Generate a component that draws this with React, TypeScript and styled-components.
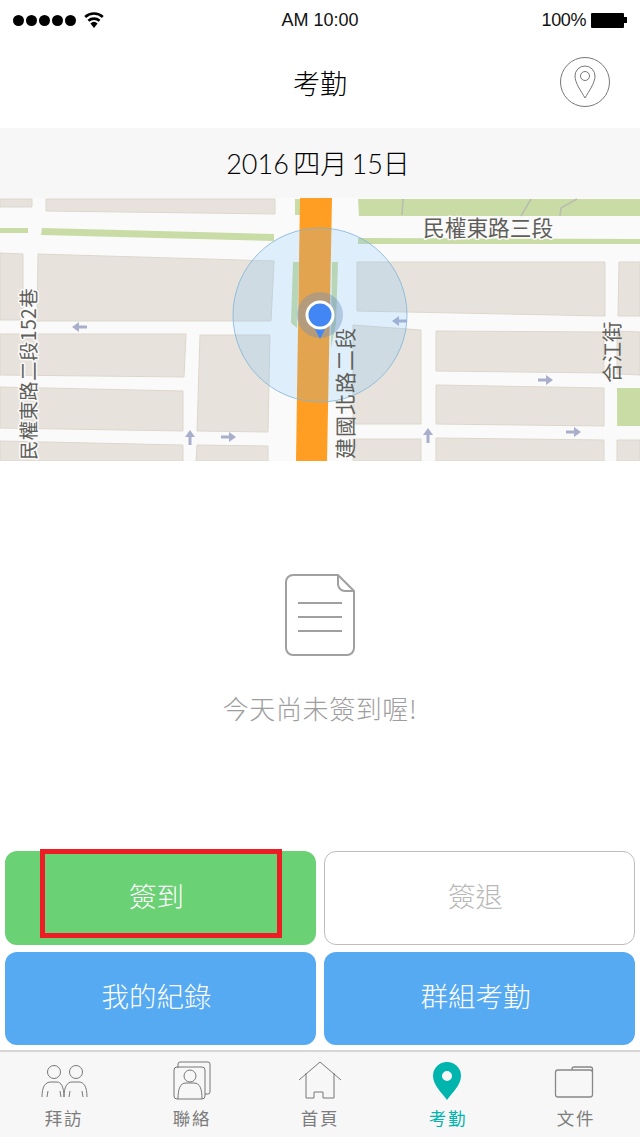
import * as React from "react";
import styled, { createGlobalStyle } from "styled-components";

const CJK = `"Noto Sans CJK TC", "Noto Sans CJK SC", sans-serif`;

const GlobalStyle = createGlobalStyle`
  html, body {
    margin: 0;
    padding: 0;
    background: #fff;
  }
  body {
    font-family: "Liberation Sans", ${CJK};
  }
`;

const Page = styled.div`
  width: 640px;
  height: 1137px;
  display: flex;
  flex-direction: column;
  overflow: hidden;
  background: #fff;
`;

const StatusBar = styled.div`
  height: 40px;
  padding: 0 13px 0 13px;
  display: grid;
  grid-template-columns: 1fr auto 1fr;
  align-items: center;
  color: #111;
  font-size: 18px;
  box-sizing: border-box;
`;

const Signal = styled.div`
  display: flex;
  align-items: center;
  gap: 2px;
`;

const Dot = styled.span`
  width: 11px;
  height: 11px;
  border-radius: 50%;
  background: #000;
`;

const Wifi = styled.svg`
  width: 22px;
  height: 16px;
  margin-left: 5px;
`;

const Clock = styled.span`
  font-family: "Liberation Sans", sans-serif;
`;

const Battery = styled.div`
  display: flex;
  align-items: center;
  justify-content: flex-end;
  gap: 5px;
  letter-spacing: -0.4px;
`;

const BatteryBody = styled.span`
  width: 33px;
  height: 15px;
  background: #000;
  border-radius: 1px;
  position: relative;
  margin-right: 3px;
  &::after {
    content: "";
    position: absolute;
    right: -3px;
    top: 4px;
    width: 3px;
    height: 6px;
    background: #000;
  }
`;

const Header = styled.header`
  height: 88px;
  display: flex;
  align-items: center;
  justify-content: center;
  position: relative;
  padding-bottom: 4px;
  box-sizing: border-box;
`;

const Title = styled.h1`
  margin: 0;
  font-family: ${CJK};
  font-weight: 300;
  font-size: 27px;
  color: #000;
`;

const LocateButton = styled.button`
  position: absolute;
  right: 30px;
  top: 17px;
  width: 50px;
  height: 50px;
  padding: 0;
  border: 1px solid #777;
  border-radius: 50%;
  background: transparent;
  display: flex;
  align-items: center;
  justify-content: center;
`;

const DateBar = styled.div`
  height: 70px;
  background: #f7f7f7;
  display: flex;
  align-items: center;
  justify-content: center;
  font-family: "Lato", ${CJK};
  font-size: 27px;
  font-weight: 300;
  color: #000;
  word-spacing: -3px;
  padding: 0 4px 2px 0;
  box-sizing: border-box;
`;

const MapFrame = styled.svg`
  display: block;
  width: 640px;
  height: 263px;
  flex: none;
`;

const Empty = styled.section`
  flex: 1;
  display: flex;
  flex-direction: column;
  align-items: center;
  padding-top: 113px;
  box-sizing: border-box;
`;

const EmptyText = styled.p`
  margin: 32px 0 0;
  font-family: ${CJK};
  font-weight: 300;
  font-size: 26px;
  line-height: 40px;
  letter-spacing: 0.6px;
  color: #9e9e9e;
`;

const Actions = styled.div`
  display: grid;
  grid-template-columns: 311px 311px;
  grid-template-rows: 94px 93px;
  column-gap: 8px;
  row-gap: 7px;
  padding: 0 5px;
  margin-bottom: 5px;
`;

const Action = styled.div<{ $tone: "green" | "blue" | "idle" }>`
  position: relative;
  display: flex;
  align-items: center;
  justify-content: center;
  box-sizing: border-box;
  border-radius: 12px;
  padding: 0 8px 7px 0;
  font-family: ${CJK};
  font-weight: 300;
  font-size: 27.5px;
  color: ${(p) => (p.$tone === "idle" ? "#b8b8b8" : "#fff")};
  background: ${(p) =>
    p.$tone === "green" ? "#6bd175" : p.$tone === "blue" ? "#56aaf2" : "#fff"};
  border: ${(p) => (p.$tone === "idle" ? "1px solid #bdbdbd" : "none")};
`;

const Highlight = styled.span`
  position: absolute;
  left: 35px;
  top: -2px;
  width: 242px;
  height: 89px;
  box-sizing: border-box;
  border: 5px solid #ee1c25;
`;

const TabBar = styled.nav`
  height: 87px;
  flex: none;
  box-sizing: border-box;
  border-top: 2px solid #d6d6d6;
  background: #f7f7f7;
  display: grid;
  grid-template-columns: repeat(5, 128px);
`;

const Tab = styled.div<{ $active?: boolean }>`
  display: flex;
  flex-direction: column;
  align-items: center;
  padding-top: 9px;
  box-sizing: border-box;
  font-family: ${CJK};
  font-size: 17.5px;
  line-height: 26px;
  letter-spacing: 1.8px;
  color: ${(p) => (p.$active ? "#00b5ad" : "#7c7c7c")};
`;

const TabIcon = styled.svg`
  width: 56px;
  height: 42px;
  flex: none;
  margin-bottom: 2px;
`;

type Pt = number[];

// blocks in the map, page coordinates minus the 198px of the bars above
const blocks: Pt[] = [
  [0, 1, 32, 1, 32, 9, 0, 9],
  [46, 1, 275, 1, 275, 16, 46, 13],
  [0, 55, 23, 56, 23, 122, 0, 122],
  [38, 56, 274, 63, 271, 123, 37, 123],
  [0, 136, 186, 136, 184, 179, 0, 177],
  [200, 137, 270, 137, 268, 234, 197, 233],
  [0, 189, 183, 193, 183, 233, 0, 230],
  [0, 243, 183, 247, 183, 263, 0, 263],
  [197, 247, 268, 248, 268, 263, 196, 263],
  [357, 64, 605, 64, 605, 118, 357, 113],
  [619, 64, 640, 64, 640, 118, 618, 118],
  [353, 127, 421, 132, 421, 226, 353, 226],
  [436, 133, 604, 134, 604, 175, 436, 173],
  [436, 187, 604, 190, 604, 228, 436, 226],
  [617, 133, 640, 134, 640, 177, 617, 176],
  [353, 241, 421, 241, 421, 263, 353, 263],
  [436, 240, 604, 242, 604, 263, 436, 263],
  [617, 242, 640, 242, 640, 263, 617, 263],
];

const greens: Pt[] = [
  [0, 30, 28, 30, 28, 35, 0, 35],
  [42, 30, 274, 36, 274, 43, 41, 37],
  [295, 1, 300, 1, 300, 17, 295, 17],
  [358, 1, 640, 1, 640, 18, 359, 18],
  [358, 40, 640, 41, 640, 46, 358, 46],
  [293, 64, 299, 64, 297, 130, 291, 125],
  [332, 64, 338, 64, 336, 125, 331, 150],
  [617, 190, 640, 190, 640, 228, 617, 228],
];

const arrows = [
  { x: 80, y: 129, r: 180 },
  { x: 190, y: 240, r: -90 },
  { x: 228, y: 239, r: 0 },
  { x: 400, y: 123, r: 180 },
  { x: 428, y: 238, r: -90 },
  { x: 545, y: 182, r: 0 },
  { x: 573, y: 234, r: 0 },
];

const MapView = () => (
  <MapFrame viewBox="0 0 640 263">
    <rect width="640" height="263" fill="#fbfafa" />
    {blocks.map((b, i) => (
      <polygon key={i} points={b.join(" ")} fill="#e7e3dc" stroke="#dcd7cd" />
    ))}
    {greens.map((g, i) => (
      <polygon key={i} points={g.join(" ")} fill="#c9dca6" />
    ))}
    <path d="M403 1l-1 16M521 18l10-17M560 18l1-8 16-9" stroke="#b9bcae" strokeWidth="1.5" fill="none" />
    <polygon points="300,0 332,0 327,263 296,263" fill="#ff9e22" />
    {arrows.map((a, i) => (
      <g key={i} transform={`translate(${a.x} ${a.y}) rotate(${a.r})`}>
        <path d="M-7 0H2" stroke="#a9aecb" strokeWidth="3" />
        <path d="M1-5L8 0L1 5Z" fill="#a9aecb" />
      </g>
    ))}
    <g fontFamily={CJK} fill="#5f5f5a" stroke="#fbfafa" strokeWidth="3" paintOrder="stroke" strokeLinejoin="round">
      <text x="423" y="38" fontSize="21.7">民權東路三段</text>
      <text transform="translate(36 262) rotate(-90)" fontSize="19.4" letterSpacing="0.4">民權東路二段152巷</text>
    </g>
    <circle cx="320" cy="117" r="87" fill="#6ebeff" fillOpacity="0.2" stroke="#7fb3d8" strokeWidth="0.8" />
    <g fontFamily={CJK} fill="#5f5f5a">
      <text transform="translate(353 261) rotate(-90)" fontSize="21" letterSpacing="1">建國北路二段</text>
      <text transform="translate(620 185) rotate(-90)" fontSize="20.5">合江街</text>
    </g>
    <circle cx="320" cy="117" r="23" fill="#6f8fc0" fillOpacity="0.4" />
    <path d="M313 127L320 141L327 127Z" fill="#4286f4" />
    <circle cx="320" cy="117" r="13" fill="#4286f4" stroke="#fff" strokeWidth="3" />
  </MapFrame>
);

const App = () => (
  <Page>
    <GlobalStyle />
    <StatusBar>
      <Signal>
        <Dot />
        <Dot />
        <Dot />
        <Dot />
        <Dot />
        <Wifi viewBox="0 0 22 16">
          <path d="M11 16L7.4 11.4a5.4 5.4 0 0 1 7.2 0Z" fill="#000" />
          <path d="M5.4 8.8a8.4 8.4 0 0 1 11.2 0M2.2 5a13 13 0 0 1 17.6 0" stroke="#000" strokeWidth="2.6" fill="none" />
        </Wifi>
      </Signal>
      <Clock>AM 10:00</Clock>
      <Battery>
        100%
        <BatteryBody />
      </Battery>
    </StatusBar>

    <Header>
      <Title>考勤</Title>
      <LocateButton>
        <svg width="22" height="34" viewBox="0 0 22 34" fill="none" stroke="#777" strokeWidth="1">
          <path d="M11 33C7 26 1 18 1 11a10 10 0 0 1 20 0c0 7-6 15-10 22Z" />
          <circle cx="11" cy="11" r="4.5" />
        </svg>
      </LocateButton>
    </Header>

    <DateBar>2016 四月 15日</DateBar>

    <MapView />

    <Empty>
      <svg width="70" height="82" viewBox="0 0 70 82" fill="none" stroke="#a0a0a0" strokeWidth="2">
        <path d="M53 1H8a7 7 0 0 0-7 7v66a7 7 0 0 0 7 7h54a7 7 0 0 0 7-7V17Z" />
        <path d="M53 1v9a7 7 0 0 0 7 7h9" />
        <path d="M13 29h44M13 43h44M13 57h44" />
      </svg>
      <EmptyText>今天尚未簽到喔!</EmptyText>
    </Empty>

    <Actions>
      <Action $tone="green">
        簽到
        <Highlight />
      </Action>
      <Action $tone="idle">簽退</Action>
      <Action $tone="blue">我的紀錄</Action>
      <Action $tone="blue">群組考勤</Action>
    </Actions>

    <TabBar>
      <Tab>
        <TabIcon viewBox="0 0 56 42" fill="none" stroke="#777" strokeWidth="1">
          <circle cx="18" cy="11" r="6.5" />
          <circle cx="40" cy="11" r="6.5" />
          <path d="M6 36c0-10 3-15 9-15h6c4 0 7 5 7 15c0-10 3-15 8-15h7c5 0 8 5 8 15" />
          <path d="M12 30l-1 6M24 30l1 6M34 30l-1 6M46 30l1 6" />
        </TabIcon>
        拜訪
      </Tab>
      <Tab>
        <TabIcon viewBox="0 0 56 42" fill="none" stroke="#777" strokeWidth="1">
          <path d="M14 7V3a2 2 0 0 1 2-2h28a2 2 0 0 1 2 2v28a2 2 0 0 1-2 2h-3" />
          <rect x="10" y="6" width="31" height="32" rx="3" />
          <circle cx="26" cy="15" r="6" />
          <path d="M14 38c0-10 2-16 8-16h8c6 0 8 6 8 16" />
        </TabIcon>
        聯絡
      </Tab>
      <Tab>
        <TabIcon viewBox="0 0 56 42" fill="none" stroke="#777" strokeWidth="1">
          <path d="M7 19L28 1L49 19" />
          <path d="M14 12V37H22V31H31V37H42V12" />
        </TabIcon>
        首頁
      </Tab>
      <Tab $active>
        <TabIcon viewBox="0 0 56 42">
          <path
            fillRule="evenodd"
            fill="#00b5ad"
            d="M27 39C22 32 13 24 13 15a14 14 0 0 1 28 0c0 9-9 17-14 24ZM27 20a5 5 0 1 0 0-10a5 5 0 0 0 0 10Z"
          />
        </TabIcon>
        考勤
      </Tab>
      <Tab>
        <TabIcon viewBox="0 0 56 42" fill="none" stroke="#888" strokeWidth="1.3">
          <rect x="7.5" y="9" width="37" height="27" rx="2.5" />
          <path d="M24 9V8a2 2 0 0 1 2-2h16.500a2 2 0 0 1 2 2v3" />
        </TabIcon>
        文件
      </Tab>
    </TabBar>
  </Page>
);

export default App;
